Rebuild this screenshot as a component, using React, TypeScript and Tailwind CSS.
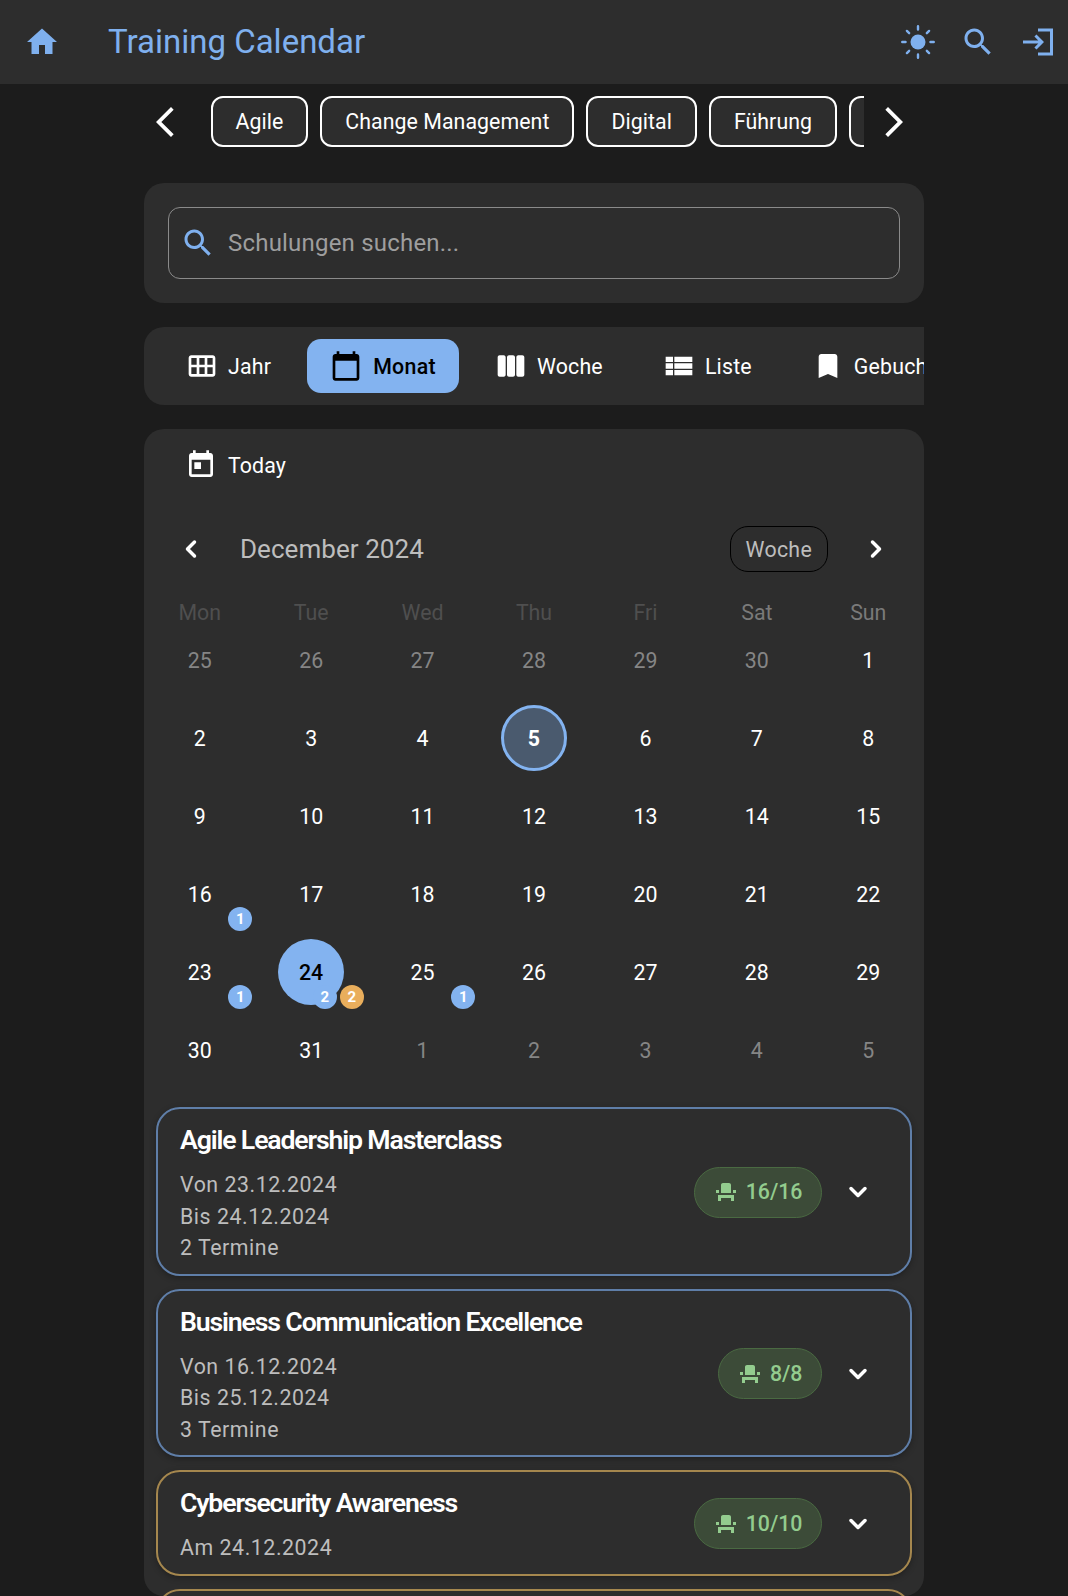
import { ChevronDown, ChevronLeft, ChevronRight } from 'lucide-react'

function MdIcon({ d, className }: { d: string; className?: string }) {
  return (
    <svg viewBox="0 0 24 24" fill="currentColor" className={className}>
      <path d={d} />
    </svg>
  )
}

const icons = {
  home: 'M10 20v-6h4v6h5v-8h3L12 3 2 12h3v8z',
  search:
    'M15.5 14h-.79l-.28-.27C15.41 12.59 16 11.11 16 9.5 16 5.91 13.09 3 9.5 3S3 5.91 3 9.5 5.91 16 9.5 16c1.61 0 3.09-.59 4.23-1.57l.27.28v.79l5 4.99L20.49 19l-4.99-5zm-6 0C7.01 14 5 11.99 5 9.5S7.01 5 9.5 5 14 7.01 14 9.5 11.99 14 9.5 14z',
  login: 'M11 7 9.6 8.4l2.6 2.6H2v2h10.2l-2.6 2.6L11 17l5-5-5-5zm9 12h-8v2h10V3H12v2h8v14z',
  back: 'M17.77 3.77 16 2 6 12l10 10 1.77-1.77L9.54 12z',
  forward: 'M6.23 20.23 8 22l10-10L8 2 6.23 3.77 14.46 12z',
  month: 'M20 3h-1V1h-2v2H7V1H5v2H4c-1.1 0-2 .9-2 2v16c0 1.1.9 2 2 2h16c1.1 0 2-.9 2-2V5c0-1.1-.9-2-2-2zm0 18H4V8h16v13z',
  year: 'M20 4H4c-1.1 0-2 .9-2 2v12c0 1.1.9 2 2 2h16c1.1 0 2-.9 2-2V6c0-1.1-.9-2-2-2zM8 18H4v-5h4v5zm0-7H4V6h4v5zm6 7h-4v-5h4v5zm0-7h-4V6h4v5zm6 7h-4v-5h4v5zm0-7h-4V6h4v5z',
  week: 'M3.5 4h3c.8 0 1.5.7 1.5 1.5v13c0 .8-.7 1.500-1.500 1.500h-3C2.700 20 2 19.300 2 18.500v-13C2 4.700 2.700 4 3.500 4zm7 0h3c.8 0 1.500.7 1.500 1.500v13c0 .8-.7 1.500-1.500 1.500h-3c-.8 0-1.500-.7-1.500-1.500v-13c0-.8.7-1.500 1.500-1.500zm7 0h3c.8 0 1.500.7 1.500 1.500v13c0 .8-.7 1.500-1.500 1.500h-3c-.8 0-1.500-.7-1.500-1.500v-13c0-.8.7-1.500 1.500-1.500z',
  list: 'M2 14h5.500v-4H2v4zm0 5h5.500v-4H2v4zM2 9h5.500V5H2v4zm6.500 5H22v-4H8.500v4zm0 5H22v-4H8.500v4zm0-14v4H22V5H8.500z',
  bookmark: 'M17 3H7c-1.100 0-1.990.9-1.990 2L5 21l7-3 7 3V5c0-1.100-.9-2-2-2z',
  today:
    'M19 3h-1V1h-2v2H8V1H6v2H5c-1.110 0-1.990.9-1.990 2L3 19c0 1.100.89 2 2 2h14c1.100 0 2-.9 2-2V5c0-1.100-.9-2-2-2zm0 16H5V8h14v11zM7 10h5v5H7z',
  seat: 'M4 18v3h3v-3h10v3h3v-6H4zm15-8h3v3h-3zM2 10h3v3H2zm15 3H7V5c0-1.100.9-2 2-2h6c1.100 0 2 .9 2 2v8z',
}

function SunIcon({ className }: { className?: string }) {
  return (
    <svg viewBox="0 0 24 24" className={className} fill="currentColor" stroke="currentColor" strokeLinecap="round">
      <circle cx="12" cy="12" r="5" stroke="none" />
      <path
        strokeWidth="1.6"
        fill="none"
        d="M12 1.500v2.200M12 20.300v2.200M1.500 12h2.200M20.300 12h2.200M4.600 4.600l1.500 1.500M17.900 17.900l1.500 1.500M4.600 19.400l1.500-1.500M17.900 6.100l1.500-1.500"
      />
    </svg>
  )
}

const chips = ['Agile', 'Change Management', 'Digital', 'Führung']

const tabs = [
  { label: 'Jahr', icon: icons.year },
  { label: 'Monat', icon: icons.month, active: true },
  { label: 'Woche', icon: icons.week },
  { label: 'Liste', icon: icons.list },
  { label: 'Gebucht', icon: icons.bookmark },
]

const weekdays = [
  { label: 'Mon', dim: true },
  { label: 'Tue', dim: true },
  { label: 'Wed', dim: true },
  { label: 'Thu', dim: true },
  { label: 'Fri', dim: true },
  { label: 'Sat' },
  { label: 'Sun' },
]

interface Day {
  n: number
  outside?: boolean
  today?: boolean
  selected?: boolean
  blue?: number
  orange?: number
}

const days: Day[] = [
  { n: 25, outside: true },
  { n: 26, outside: true },
  { n: 27, outside: true },
  { n: 28, outside: true },
  { n: 29, outside: true },
  { n: 30, outside: true },
  { n: 1 },
  { n: 2 },
  { n: 3 },
  { n: 4 },
  { n: 5, today: true },
  { n: 6 },
  { n: 7 },
  { n: 8 },
  { n: 9 },
  { n: 10 },
  { n: 11 },
  { n: 12 },
  { n: 13 },
  { n: 14 },
  { n: 15 },
  { n: 16, blue: 1 },
  { n: 17 },
  { n: 18 },
  { n: 19 },
  { n: 20 },
  { n: 21 },
  { n: 22 },
  { n: 23, blue: 1 },
  { n: 24, selected: true, blue: 2, orange: 2 },
  { n: 25, blue: 1 },
  { n: 26 },
  { n: 27 },
  { n: 28 },
  { n: 29 },
  { n: 30 },
  { n: 31 },
  { n: 1, outside: true },
  { n: 2, outside: true },
  { n: 3, outside: true },
  { n: 4, outside: true },
  { n: 5, outside: true },
]

const schulungen = [
  {
    title: 'Agile Leadership Masterclass',
    lines: ['Von 23.12.2024', 'Bis 24.12.2024', '2 Termine'],
    seats: '16/16',
    border: 'border-[#5f7ea8]',
  },
  {
    title: 'Business Communication Excellence',
    lines: ['Von 16.12.2024', 'Bis 25.12.2024', '3 Termine'],
    seats: '8/8',
    border: 'border-[#5f7ea8]',
  },
  {
    title: 'Cybersecurity Awareness',
    lines: ['Am 24.12.2024'],
    seats: '10/10',
    border: 'border-[#a5874e]',
  },
]

function Badge({ count, color }: { count: number; color: string }) {
  return (
    <span
      className={`flex h-6 w-6 items-center justify-center rounded-full text-[15px] leading-none font-bold text-white ${color}`}
    >
      {count}
    </span>
  )
}

export default function App() {
  return (
    <div className="h-[1596px] overflow-hidden bg-[#1c1c1c] font-['Roboto',sans-serif] text-white">
      {/* App bar */}
      <header className="flex h-[84px] items-center bg-[#2d2d2d] pr-[12px] pl-[24px] text-[#7fb0ee]">
        <MdIcon d={icons.home} className="h-9 w-9" />
        <h1 className="ml-[48px] flex-1 pb-[2px] text-[33px] leading-none">Training Calendar</h1>
        <SunIcon className="mr-[24px] h-9 w-9" />
        <MdIcon d={icons.search} className="mr-[24px] h-9 w-9" />
        <MdIcon d={icons.login} className="h-9 w-9" />
      </header>

      <main className="mx-auto w-[780px]">
        {/* Kategorien */}
        <div className="flex h-[75px] items-center">
          <MdIcon d={icons.back} className="h-[36px] w-[42px] shrink-0 text-white" />
          <div className="ml-[24.5px] flex h-[51px] w-[653.5px] shrink-0 gap-[12px] overflow-hidden">
            {chips.map((chip) => (
              <span
                key={chip}
                className="flex h-[51px] shrink-0 items-center rounded-[12px] border-2 border-white bg-[#2d2d2d] px-[23px] text-[21.33px] tracking-[0.05px]"
              >
                {chip}
              </span>
            ))}
            <span className="h-[51px] w-[100px] shrink-0 rounded-[12px] border-2 border-white bg-[#2d2d2d]" />
          </div>
          <MdIcon d={icons.forward} className="ml-[9px] h-[36px] w-[42px] shrink-0 text-white" />
        </div>

        {/* Suche */}
        <section className="mt-[24px] rounded-[20px] bg-[#2d2d2d] p-[24px]">
          <div className="flex h-[72px] items-center rounded-[12px] border border-[#8a8a8a] pl-[11px]">
            <MdIcon d={icons.search} className="h-9 w-9 text-[#7fb0ee]" />
            <span className="ml-[12px] text-[24px] tracking-[0.2px] text-[#9e9e9e]">Schulungen suchen...</span>
          </div>
        </section>

        {/* Ansicht */}
        <nav className="mt-[24px] flex h-[78px] items-center gap-[11px] overflow-hidden rounded-l-[20px] bg-[#2d2d2d] pl-[17.5px]">
          {tabs.map((tab) => (
            <div
              key={tab.label}
              className={
                tab.active
                  ? 'flex h-[54px] shrink-0 items-center gap-[11px] rounded-[14px] bg-[#83b3f0] px-[23.5px] text-[21.33px] font-medium tracking-[0.3px] text-black'
                  : 'flex h-[54px] shrink-0 items-center gap-[10px] px-[24.5px] text-[21.33px] tracking-[0.2px] text-white'
              }
            >
              <MdIcon d={tab.icon} className="h-8 w-8" />
              <span className="pt-[2px]">{tab.label}</span>
            </div>
          ))}
        </nav>

        {/* Kalender */}
        <section className="mt-[24px] h-[1167px] overflow-hidden rounded-[20px] bg-[#2d2d2d]">
          <div className="flex h-[72px] items-center pl-[41px]">
            <MdIcon d={icons.today} className="h-8 w-8" />
            <span className="ml-[11px] pt-[2px] text-[21.33px] tracking-[0.1px]">Today</span>
          </div>

          <div className="flex h-[96px] items-center pr-[34px] pl-[33px]">
            <ChevronLeft className="h-[28px] w-[28px]" strokeWidth={3} />
            <span className="ml-[35px] flex-1 text-[26px] tracking-[0.05px] text-[#bdbdbd]">December 2024</span>
            <span className="flex h-[46px] items-center rounded-[18px] border-[1.5px] border-black px-[15px] pt-[2px] text-[21.33px] tracking-[0.3px] text-[#bdbdbd]">
              Woche
            </span>
            <ChevronRight className="ml-[34px] h-[28px] w-[28px]" strokeWidth={3} />
          </div>

          <div className="grid grid-cols-7">
            {weekdays.map((day) => (
              <div
                key={day.label}
                className={`h-[25px] text-center text-[21.33px] leading-[32px] ${
                  day.dim ? 'text-[#4f4f4f]' : 'text-[#7a7a7a]'
                }`}
              >
                {day.label}
              </div>
            ))}
          </div>

          <div className="grid grid-cols-7">
            {days.map((day, i) => (
              <div key={i} className="relative flex h-[78px] items-center justify-center">
                {day.selected && (
                  <span className="absolute h-[66px] w-[66px] -translate-y-[1px] rounded-full bg-[#83b3f0]" />
                )}
                {day.today && (
                  <span className="absolute h-[66px] w-[66px] -translate-y-[1px] rounded-full border-[3px] border-[#83b3f0] bg-[#4a5a6e]" />
                )}
                <span
                  className={`relative text-[21.33px] ${day.outside ? 'text-[#858585]' : ''} ${
                    day.selected ? 'font-medium text-black' : ''
                  } ${day.today ? 'font-bold' : ''}`}
                >
                  {day.n}
                </span>
                {(day.blue || day.orange) && (
                  <div className="absolute top-[51px] right-[3px] flex gap-[3px]">
                    {day.blue && <Badge count={day.blue} color="bg-[#83b3f0]" />}
                    {day.orange && <Badge count={day.orange} color="bg-[#e9ae5c]" />}
                  </div>
                )}
              </div>
            ))}
          </div>

          {/* Schulungen */}
          <div className="mt-[17px] flex flex-col gap-[13px] px-[12px]">
            {schulungen.map((s) => (
              <article
                key={s.title}
                className={`flex items-center rounded-[24px] border-2 bg-[#2d2d2d] pt-[12px] pr-[38px] pb-[10px] pl-[22px] shadow-[0_2px_6px_rgba(0,0,0,0.3)] ${s.border}`}
              >
                <div className="min-w-0 flex-1">
                  <h3 className="text-[26.67px] leading-[38px] font-semibold tracking-[-1.15px]">{s.title}</h3>
                  <div className="mt-[10px] text-[21.33px] leading-[31.5px] tracking-[0.55px] text-[#bdbdbd]">
                    {s.lines.map((line) => (
                      <div key={line}>{line}</div>
                    ))}
                  </div>
                </div>
                <div className="flex h-[51px] items-center gap-[8px] rounded-full border-[1.5px] border-[#4a6a42] bg-[#3c4b38] px-[18.5px] text-[21.33px] font-medium text-[#93cc8e]">
                  <MdIcon d={icons.seat} className="h-[24px] w-[24px]" />
                  <span>{s.seats}</span>
                </div>
                <ChevronDown className="ml-[22px] h-[28px] w-[28px]" strokeWidth={3} />
              </article>
            ))}
            <div className="h-[106px] rounded-[24px] border-2 border-[#a5874e] bg-[#2d2d2d]" />
          </div>
        </section>
      </main>
    </div>
  )
}
